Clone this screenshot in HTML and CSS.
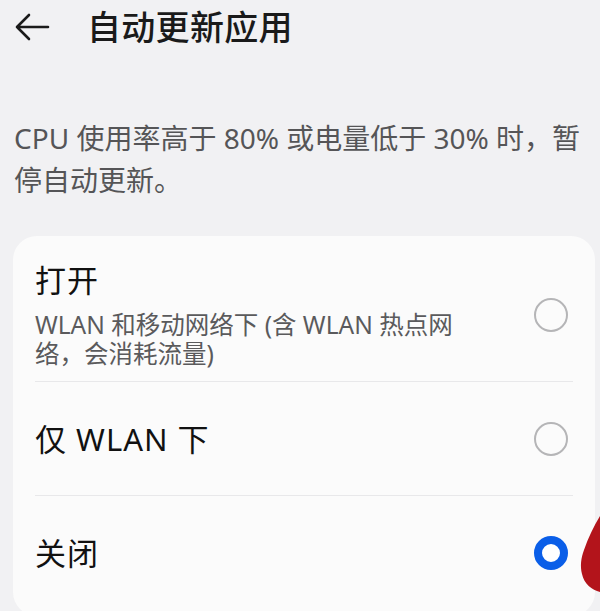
FILE: index.html
```html
<!DOCTYPE html>
<html lang="zh-CN">
<head>
<meta charset="utf-8">
<title>自动更新应用</title>
<link rel="stylesheet" href="styles.css">
</head>
<body>
<div class="screen">
  <header class="topbar">
    <svg class="back" width="36" height="28" viewBox="0 0 36 28" aria-hidden="true">
      <path d="M34 14H3M15 2L3 14l12 12" fill="none" stroke="#1a1a1a" stroke-width="2.6" stroke-linecap="round" stroke-linejoin="round"/>
    </svg>
    <h1 class="title">自动更新应用</h1>
  </header>

  <p class="desc">CPU 使用率高于 80% 或电量低于 30% 时，暂停自动更新。</p>

  <section class="card">
    <div class="row row-tall">
      <div class="row-text">
        <div class="row-title">打开</div>
        <div class="row-sub">WLAN 和移动网络下 (含 WLAN 热点网络，会消耗流量)</div>
      </div>
      <span class="radio"></span>
    </div>
    <div class="divider"></div>
    <div class="row">
      <div class="row-text"><div class="row-title">仅 WLAN 下</div></div>
      <span class="radio"></span>
    </div>
    <div class="divider"></div>
    <div class="row">
      <div class="row-text"><div class="row-title">关闭</div></div>
      <span class="radio radio-on"></span>
    </div>
  </section>

  <svg class="marker" width="20" height="80" viewBox="0 0 20 80" aria-hidden="true">
    <path d="M20 0 C14 10 8 22 4 34 C1 42 0 50 2 58 C4 68 12 74 20 76 Z" fill="#b3141b"/>
  </svg>
</div>
</body>
</html>
```

FILE: styles.css
```css
html, body {
  margin: 0;
  padding: 0;
}

body {
  background: #f1f1f3;
  font-family: "Noto Sans", "Noto Sans CJK SC", sans-serif;
  color: #1a1a1a;
}

.screen {
  position: relative;
  width: 600px;
  height: 611px;
  overflow: hidden;
}

.topbar {
  display: flex;
  align-items: center;
  height: 54px;
  padding-left: 14px;
}

.back {
  flex: none;
}

.title {
  margin: 0 0 0 37px;
  font-size: 34px;
  font-weight: 500;
  line-height: 40px;
  letter-spacing: 0.3px;
}

.desc {
  margin: 63px 0 0;
  padding: 0 14px;
  font-size: 28px;
  line-height: 42px;
  color: #555557;
}

.card {
  margin: 35px 5px 0 13px;
  height: 380px;
  background: #fbfbfb;
  border-radius: 24px;
  padding: 0 22px;
}

.row {
  display: flex;
  align-items: center;
  justify-content: space-between;
  height: 113px;
  padding-right: 5px;
}

.row-tall {
  height: auto;
  padding-top: 25px;
  padding-bottom: 13px;
}

.row-text {
  max-width: 432px;
}

.row-title {
  font-size: 31px;
  line-height: 38px;
  letter-spacing: 1px;
  color: #111;
}

.row-sub {
  margin-top: 11px;
  font-size: 24.5px;
  line-height: 29px;
  color: #5a5a5c;
}

.divider {
  height: 1px;
  background: #e8e8ea;
}

.radio {
  flex: none;
  box-sizing: border-box;
  width: 34px;
  height: 34px;
  border-radius: 50%;
  border: 2px solid #b5b5b7;
}

.radio-on {
  border: 8px solid #0a5ee8;
  background: #fff;
}

.marker {
  position: absolute;
  right: 0;
  top: 516px;
}
```
